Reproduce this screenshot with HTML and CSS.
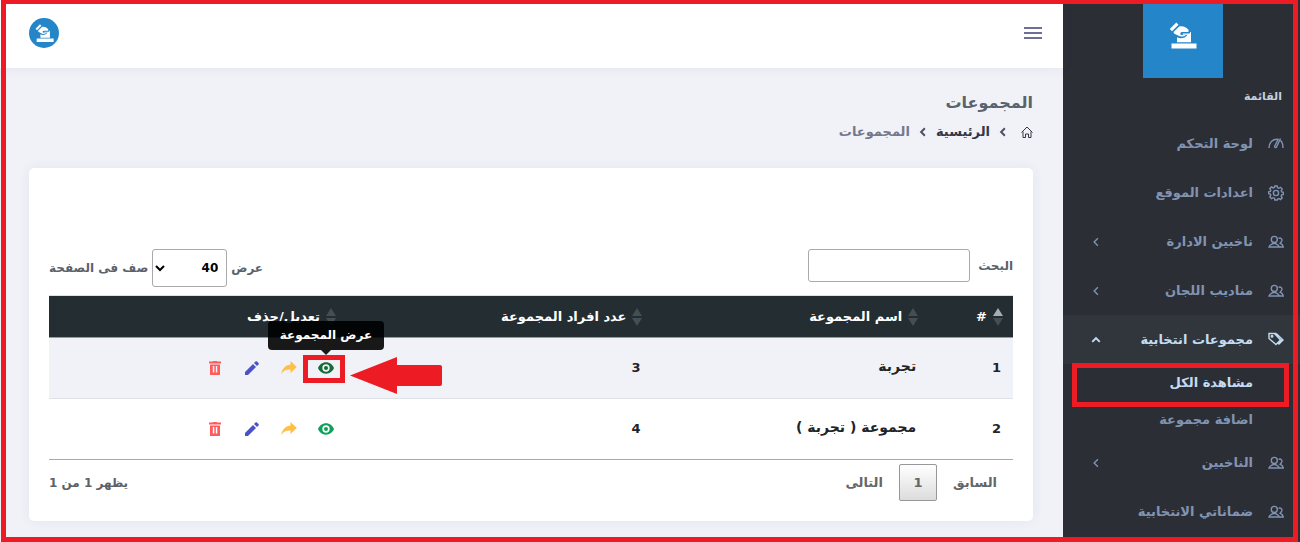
FILE: index.html
```html
<!DOCTYPE html>
<html lang="ar" dir="rtl">
<head>
<meta charset="utf-8">
<title>المجموعات</title>
<link rel="stylesheet" href="styles.css">
</head>
<body>
<svg class="defs" aria-hidden="true">
  <symbol id="vote" viewBox="0 0 28 28">
    <path d="M.8 7 7.300.5l2.200 2.200L3 9.200zM4.500 10 10.200 4.500c3-.8 6.300 0 8.800 2.800.8 1.200.8 2 .3 2.700h-6c-2.200 0-2.600 2.400-1 3h4.400c-1.200 1.800-5.400 2.200-7.700.5L5 11.500zM8 15.200c3 1.700 8.300 1.400 10.500-2.500h-4.700v-1.200h6.500c.7-.7.9-1 .9-1.600H22v10.300H8zM2.500 21.500h25v5h-25z"/>
  </symbol>
  <symbol id="users" viewBox="0 0 16 16">
    <circle cx="6.300" cy="5.400" r="3"/>
    <path d="M1 13c.3-2 2.300-2.600 4.200-3.500h2.200c1.800.9 3.600 1.500 3.900 3.500zM10.500 4.300c2.300-.8 3.700.6 3.400 2.400-.3 1.200-.9 1.800-1.800 2.500 1.500.7 2.900 1.500 3.200 3.800h-4"/>
  </symbol>
  <symbol id="arrow" viewBox="0 0 8 8"><path d="M5.500 1 2.500 4l3 3"/></symbol>
  <symbol id="eye" viewBox="0 0 24 24"><path fill-rule="evenodd" d="M12 3.500C6.500 3.500 2 7 0 12c2 5 6.500 8.500 12 8.500s10-3.500 12-8.500c-2-5-6.500-8.500-12-8.500zm0 14a5.500 5.500 0 1 1 0-11 5.500 5.500 0 0 1 0 11zM12 9a3 3 0 1 0 0 6 3 3 0 0 0 0-6z"/></symbol>
  <symbol id="share" viewBox="0 0 16 16"><path d="M9.500 1 15.800 7 9.500 13V9.600C5.500 9.300 2.500 10.500.2 14 1 9 4 5.200 9.500 4.500z"/></symbol>
  <symbol id="pencil" viewBox="0 0 16 16"><path d="M1 12v3h3l8-8-3-3zM10 3l3 3 1.500-1.500c.5-.5.5-1 0-1.500L13 1.500c-.5-.5-1-.5-1.500 0z"/></symbol>
  <symbol id="trash" viewBox="0 0 16 16"><path fill-rule="evenodd" d="M2 1.500h3.500l1-.5h3l1 .5H14v2H2zM3 4.500h10V15H3zM5.800 6v6.500h1.500V6zm3 0v6.500h1.500V6z"/></symbol>
  <symbol id="sort" viewBox="0 0 10 18"><path class="up" d="M5 0 10 8H0z"/><path class="down" d="M0 10h10L5 18z"/></symbol>
</svg>

<div class="app">
  <aside class="sidebar">
    <a class="brand" href="#" aria-label="الشعار"><svg><use href="#vote"/></svg></a>
    <h2 class="menu-title">القائمة</h2>
    <nav class="menu">
      <a class="item" href="#"><svg class="icon" viewBox="0 0 16 16"><path d="M1 12C1 6.500 4.500 3 9.500 3.200M12.500 4.500c1.800 1.500 2.500 4 2.500 7.500M12.500 2.500 8.500 11M10.500 2.800 6.800 10c-.5 1.500 1.200 2.200 1.700 1"/></svg><span>لوحة التحكم</span></a>
      <a class="item" href="#"><svg class="icon" viewBox="0 0 16 16"><path d="M6.800 1h2.400l.4 1.800 1.300.5 1.600-1 1.700 1.700-1 1.600.5 1.300 1.700.4v2.100l-1.700.5-.5 1.300 1 1.600-1.700 1.700-1.600-1-1.300.5L9.200 15H6.800l-.4-1.800-1.300-.5-1.600 1L1.800 12l1-1.600-.5-1.300L.6 8.700V6.900l1.700-.4.5-1.300-1-1.600 1.700-1.700 1.600 1 1.300-.5z"/><circle cx="8" cy="8" r="2.600"/></svg><span>اعدادات الموقع</span></a>
      <a class="item" href="#"><svg class="icon"><use href="#users"/></svg><span>ناخبين الادارة</span><svg class="chev"><use href="#arrow"/></svg></a>
      <a class="item" href="#"><svg class="icon"><use href="#users"/></svg><span>مناديب اللجان</span><svg class="chev"><use href="#arrow"/></svg></a>
      <a class="item active" href="#"><svg class="icon" viewBox="0 0 16 16"><path d="M1 1.500h5.500L12.500 8 8 12.500 1 6.500zM8.500 1.700 15 8l-4.500 4.500M6.500 1.500h2M10 12l4-4"/><circle cx="4" cy="4.200" r=".8"/></svg><span>مجموعات انتخابية</span><svg class="chev open" viewBox="0 0 8 8"><path d="M1 5.500l3-3 3 3"/></svg></a>
      <div class="submenu">
        <a class="sub current" href="#">مشاهدة الكل</a>
        <a class="sub" href="#">اضافة مجموعة</a>
      </div>
      <a class="item" href="#"><svg class="icon"><use href="#users"/></svg><span>الناخبين</span><svg class="chev"><use href="#arrow"/></svg></a>
      <a class="item" href="#"><svg class="icon"><use href="#users"/></svg><span>ضماناتي الانتخابية</span></a>
    </nav>
  </aside>

  <div class="main">
    <header class="topbar">
      <button class="burger" aria-label="القائمة"><i></i><i></i><i></i></button>
      <a class="avatar" href="#" aria-label="الحساب"><svg><use href="#vote"/></svg></a>
    </header>
    <main class="content">
      <h1>المجموعات</h1>
      <nav class="crumbs">
        <a href="#" aria-label="الصفحة الاولى"><svg class="home" viewBox="0 0 12 12"><path d="M.5 6.500 6 1l5.500 5.500M2 5.500v6h2.500V8h3v3.500H10v-6"/></svg></a>
        <svg class="sep"><use href="#arrow"/></svg>
        <a href="#">الرئيسية</a>
        <svg class="sep"><use href="#arrow"/></svg>
        <span>المجموعات</span>
      </nav>
      <section class="card">
        <div class="tools">
          <label class="search">البحث <input type="search"></label>
          <label class="length">عرض <select><option>40</option></select> صف فى الصفحة</label>
        </div>
        <table>
          <colgroup><col class="c1"><col class="c2"><col class="c3"><col class="c4"></colgroup>
          <thead>
            <tr>
              <th><button class="asc"><svg><use href="#sort"/></svg>#</button></th>
              <th><button><svg><use href="#sort"/></svg>اسم المجموعة</button></th>
              <th><button><svg><use href="#sort"/></svg>عدد افراد المجموعة</button></th>
              <th><button><svg><use href="#sort"/></svg>تعديل/حذف</button></th>
            </tr>
          </thead>
          <tbody>
            <tr>
              <td>1</td><td class="name">تجربة</td><td>3</td>
              <td><div class="actions">
                <a class="view hovered" href="#" aria-label="عرض"><svg><use href="#eye"/></svg><span class="tip">عرض المجموعة</span><svg class="pointer" viewBox="0 0 92 37"><path d="M0 18.500 47 0v8h43q2 0 2 2v17q0 2-2 2H47v8z"/></svg></a>
                <a class="send" href="#" aria-label="ارسال"><svg><use href="#share"/></svg></a>
                <a class="edit" href="#" aria-label="تعديل"><svg><use href="#pencil"/></svg></a>
                <a class="delete" href="#" aria-label="حذف"><svg><use href="#trash"/></svg></a>
              </div></td>
            </tr>
            <tr>
              <td>2</td><td class="name">مجموعة ( تجربة )</td><td>4</td>
              <td><div class="actions">
                <a class="view" href="#" aria-label="عرض"><svg><use href="#eye"/></svg></a>
                <a class="send" href="#" aria-label="ارسال"><svg><use href="#share"/></svg></a>
                <a class="edit" href="#" aria-label="تعديل"><svg><use href="#pencil"/></svg></a>
                <a class="delete" href="#" aria-label="حذف"><svg><use href="#trash"/></svg></a>
              </div></td>
            </tr>
          </tbody>
        </table>
        <div class="foot">
          <div class="pages"><button>السابق</button><button class="on">1</button><button>التالى</button></div>
          <p>يظهر 1 من 1</p>
        </div>
      </section>
    </main>
  </div>
</div>
<div class="frame"></div>
</body>
</html>
```
FILE: styles.css
```css
* { box-sizing: border-box; }
body { margin: 0; background: #f1f2f8; font: bold 13px/20px "DejaVu Sans", sans-serif; color: #5b626b; overflow: hidden; }
a { color: inherit; text-decoration: none; }
button { font: inherit; color: inherit; background: none; border: 0; padding: 0; }
.defs { position: absolute; width: 0; height: 0; }
.app { display: flex; min-height: 100vh; }
.frame { position: fixed; inset: 0 2px 0 1px; border: 5px solid #ed1c24; border-top-width: 4px; pointer-events: none; z-index: 10; }

.sidebar { width: 237px; flex: none; background: #2c2e36; color: #8094b2; }
.brand { display: flex; justify-content: center; width: 80px; height: 78px; margin: 0 77px 0 80px; padding-top: 22px; background: #2486c9; }
.brand svg { width: 28px; height: 28px; fill: #fff; }
.menu-title { margin: 9px 18px 12px; font-size: 11px; line-height: 20px; color: #c4d0dd; }
.item { display: flex; align-items: center; height: 49px; padding: 0 16px 0 28px; gap: 15px; }
.item span { flex: 1; white-space: nowrap; }
.icon { width: 16px; height: 16px; fill: none; stroke: currentColor; stroke-width: 1.4; }
.chev { width: 10px; height: 10px; fill: none; stroke: currentColor; stroke-width: 1.1; }
.chev.open { stroke-width: 1.6; }
.active { background: #31353c; color: #c3dcf2; }
.sub { display: flex; align-items: center; height: 37px; padding-right: 47px; position: relative; }
.current { color: #c3dcf2; }
.current::after { content: ""; position: absolute; inset: -1px 11px -6px 9px; border: 5px solid #ed1c24; pointer-events: none; }

.main { flex: 1; min-width: 0; }
.topbar { display: flex; align-items: center; justify-content: space-between; height: 68px; padding: 0 21px 2px 29px; background: #fff; box-shadow: 0 0 12px rgba(60, 60, 100, .08); }
.burger { display: grid; gap: 3px; width: 18px; }
.burger i { height: 2px; background: #6c6f96; }
.avatar { display: grid; place-items: center; width: 30px; height: 30px; border-radius: 50%; background: #2486c9; }
.avatar svg { width: 19px; height: 19px; fill: #fff; }
.content { padding: 24px 30px 21px 29px; }
h1 { margin: 0; font-size: 16px; line-height: 22px; }
.crumbs { display: flex; align-items: center; height: 20px; margin: 8px 0 26px; gap: 8px; color: #74788d; }
.crumbs a { color: #343747; }
.home { display: block; width: 12px; height: 12px; margin-left: 5px; fill: none; stroke: currentColor; }
.sep { width: 10px; height: 10px; fill: none; stroke: #4d5262; stroke-width: 1.6; }
.card { padding: 81px 20px 20px; background: #fff; border-radius: 5px; box-shadow: 0 0 12px rgba(60, 60, 120, .08); }
.tools { display: flex; justify-content: space-between; height: 46px; font-size: 12px; }
.search { display: flex; align-items: center; height: 33px; gap: 8px; }
.search input { width: 162px; height: 33px; border: 1px solid #aaa; border-radius: 3px; }
.length { display: flex; align-items: center; height: 38px; gap: 4px; }
.length select { width: 75px; height: 38px; padding: 0 4px; border: 1px solid #aaa; border-radius: 3px; background: #fff; font: inherit; color: #000; }

table { width: 100%; table-layout: fixed; border-collapse: collapse; border-bottom: 1px solid #aaa; color: #212529; }
.c1 { width: 8.8%; }
.c2 { width: 28.6%; }
.c3 { width: 31.8%; }
.c4 { width: 30.8%; }
th { height: 42px; padding: 0 10px; background: #232d32; color: #fff; text-align: right; border-top: 1px solid #dee2e6; border-bottom: 1px solid #999; }
th button { display: flex; align-items: center; gap: 6px; white-space: nowrap; }
th svg { width: 10px; height: 18px; fill: #444e53; }
.asc svg { color: #a8adb0; }
.up { fill: currentColor; }
th button:not(.asc) svg { color: #444e53; }
td { height: 61px; padding: 0 12px; border-bottom: 1px solid #dee2e6; }
tbody tr:first-child { background: #f1f2f8; }
tbody tr:last-child td { border-bottom-color: #aaa; }
.name { font-size: 14px; padding-bottom: 4px; }
.actions { display: flex; gap: 21px; }
.actions a { position: relative; display: block; height: 16px; }
.actions a > svg { display: block; width: 16px; height: 16px; fill: currentColor; }
.view { color: #0fa15b; }
.hovered { color: #146c37; }
.send { color: #ffbf47; }
.edit { color: #4a53c4; }
.delete { color: #ff5b5b; }
.hovered::before { content: ""; position: absolute; inset: -5px -11px -7px -15px; border: 5px solid #ed1c24; }
.tip { position: absolute; bottom: 26px; left: 50%; transform: translateX(-50%); width: 116px; height: 29px; border-radius: 4px; background: rgba(0, 0, 0, .9); color: #fff; font-size: 12px; line-height: 29px; text-align: center; white-space: nowrap; }
.tip::after { content: ""; position: absolute; top: 100%; left: 53px; border: 5px solid transparent; border-top-color: #191919; border-bottom: 0; }
.actions a > .pointer { position: absolute; left: 32px; top: -3px; width: 92px; height: 37px; fill: #ed1c24; }

.foot { display: flex; justify-content: space-between; align-items: center; padding-top: 4px; color: #666; }
.foot p { margin: 0; font-size: 12px; color: #5b626b; }
.pages { display: flex; height: 37px; }
.pages button { min-width: 38px; padding: 0 16px; border-radius: 2px; }
.pages .on { border: 1px solid #979797; background: linear-gradient(#fff, #dcdcdc); padding: 0; }
```
